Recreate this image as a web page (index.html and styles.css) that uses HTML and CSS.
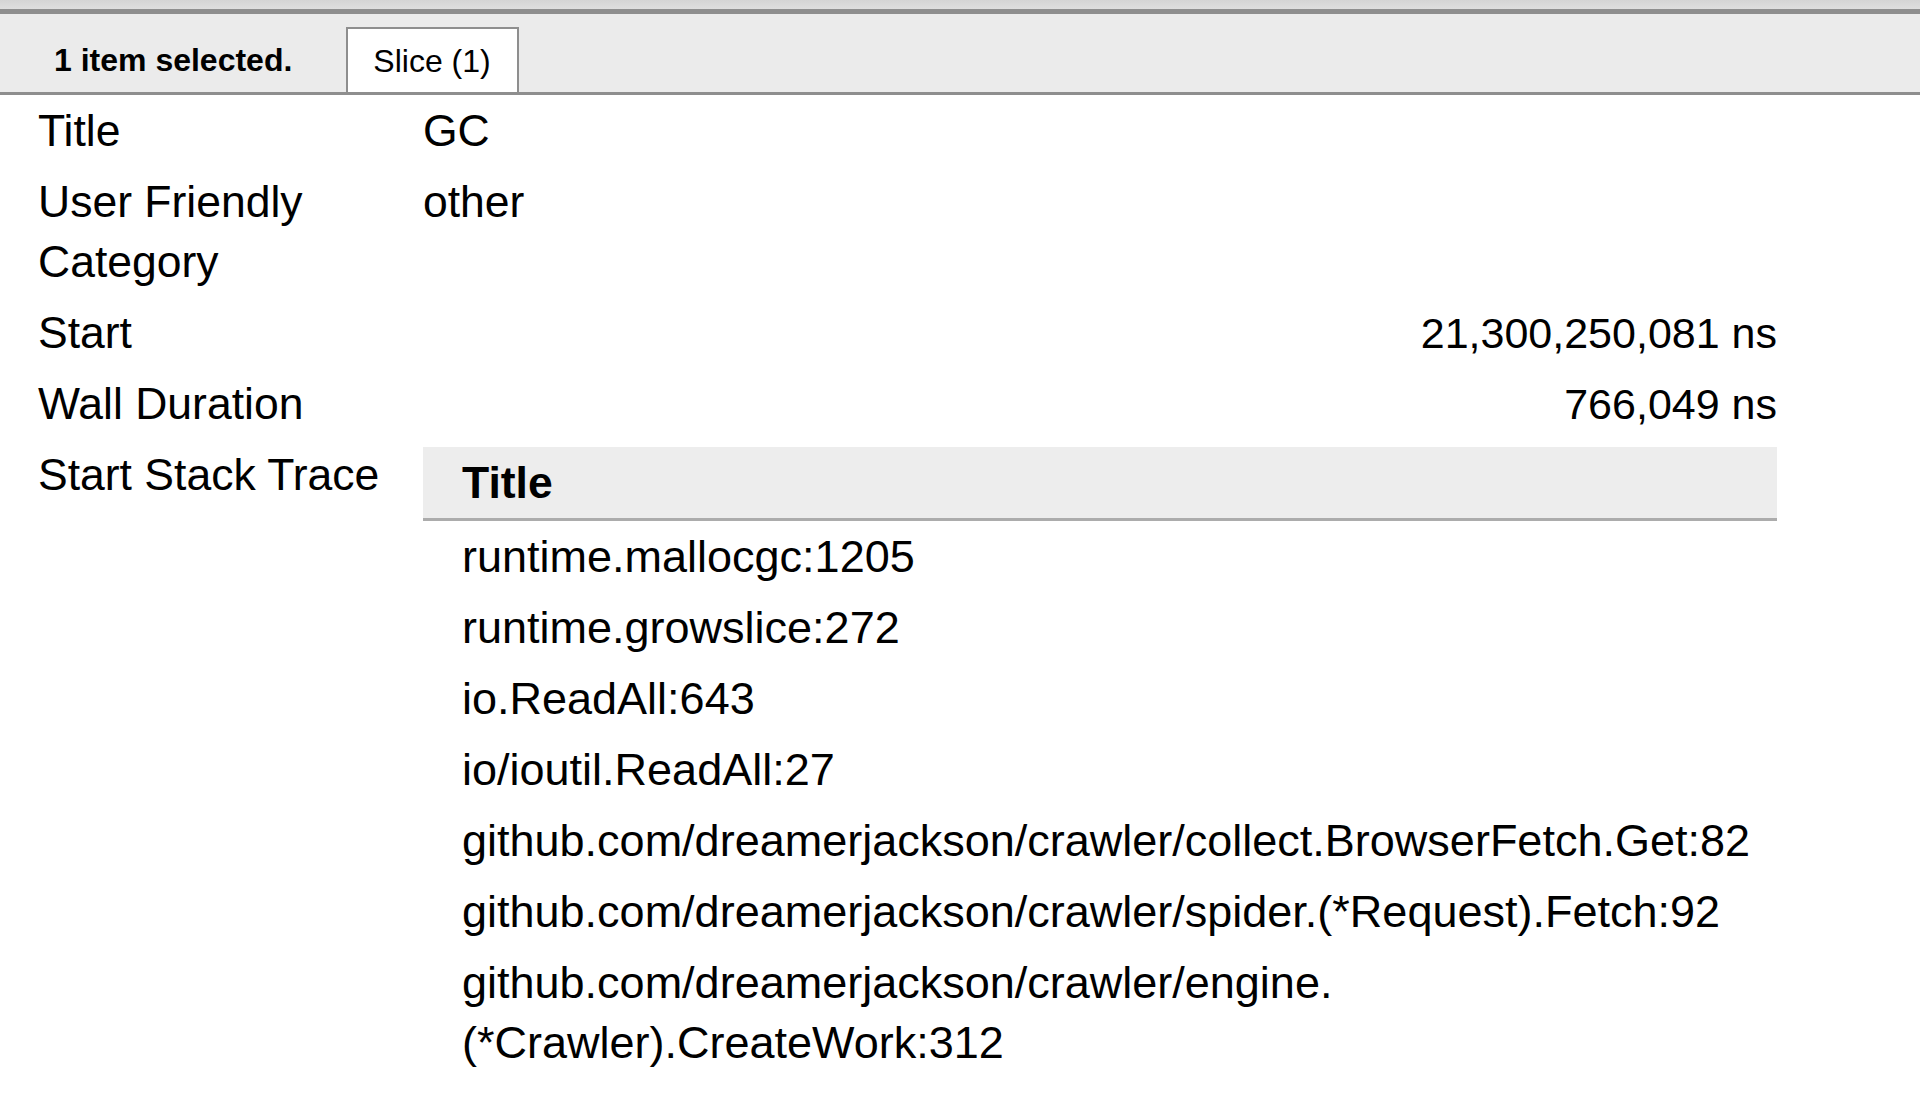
FILE: index.html
```html
<!DOCTYPE html>
<html lang="en">
<head>
<meta charset="utf-8">
<title>Details</title>
<link rel="stylesheet" href="styles.css">
</head>
<body>
<div class="panel">
  <div class="resizer"></div>
  <div class="tabbar">
    <span class="tabbar-title">1 item selected.</span>
    <div class="tab">Slice (1)</div>
  </div>
  <div class="details">
    <div class="label">Title</div>
    <div class="value">GC</div>

    <div class="label">User Friendly Category</div>
    <div class="value">other</div>

    <div class="label">Start</div>
    <div class="value num">21,300,250,081 ns</div>

    <div class="label">Wall Duration</div>
    <div class="value num">766,049 ns</div>

    <div class="label">Start Stack Trace</div>
    <div class="value stack-cell">
      <div class="stack">
        <div class="stack-head">Title</div>
        <div class="stack-row">runtime.mallocgc:1205</div>
        <div class="stack-row">runtime.growslice:272</div>
        <div class="stack-row">io.ReadAll:643</div>
        <div class="stack-row">io/ioutil.ReadAll:27</div>
        <div class="stack-row">github.com/dreamerjackson/crawler/collect.BrowserFetch.Get:82</div>
        <div class="stack-row">github.com/dreamerjackson/crawler/spider.(*Request).Fetch:92</div>
        <div class="stack-row">github.com/dreamerjackson/crawler/engine.<wbr>(*Crawler).CreateWork:312</div>
      </div>
    </div>
  </div>
</div>
</body>
</html>
```

FILE: styles.css
```css
html, body {
  margin: 0;
  padding: 0;
  background: #ffffff;
}

body {
  font-family: "Liberation Sans", Arial, Helvetica, sans-serif;
  color: #000;
}

.panel {
  width: 1920px;
  height: 1099px;
  overflow: hidden;
  background: #fff;
}

.resizer {
  height: 9px;
  background: linear-gradient(#d4d4d4, #dedede);
  border-bottom: 5px solid #8e8e8e;
}

.tabbar {
  height: 65px;
  padding-top: 13px;
  background: #ebebeb;
  border-bottom: 3px solid #8e8e8e;
  display: flex;
  align-items: stretch;
  padding-left: 54px;
  font-size: 32px;
}

.tabbar-title {
  font-weight: bold;
  line-height: 66px;
  margin-right: 54px;
}

.tab {
  background: #fff;
  border: 2px solid #8e8e8e;
  border-bottom: none;
  padding: 0 26px 0 25px;
  line-height: 64px;
}

.details {
  display: grid;
  grid-template-columns: 385px 1354px;
  padding-left: 38px;
  padding-top: 1px;
  font-size: 44.5px;
  line-height: 60px;
}

.label,
.value {
  padding: 5px 0 6px;
}

.num {
  text-align: right;
  font-size: 43px;
}

.stack-cell {
  padding-top: 7px;
}

.stack-head {
  background: #ededed;
  border-bottom: 3px solid #acacac;
  font-weight: bold;
  padding: 6px 0 5px 39px;
}

.stack-row {
  padding: 6px 0 5px 39px;
  font-size: 45px;
}
```
